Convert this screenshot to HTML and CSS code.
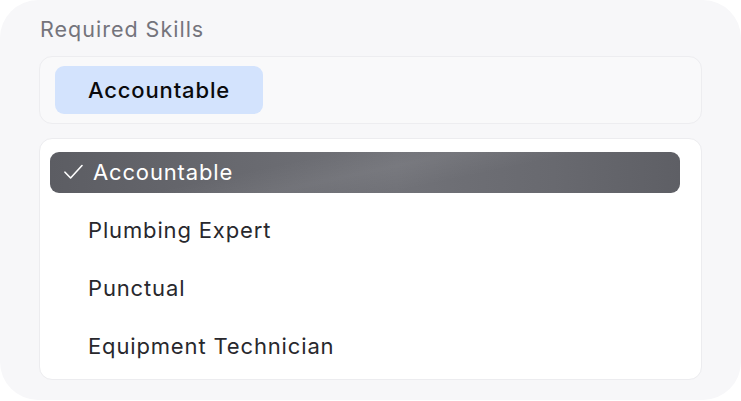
FILE: index.html
```html
<!DOCTYPE html>
<html lang="en">
<head>
<meta charset="utf-8">
<title>Required Skills</title>
<link rel="stylesheet" href="styles.css">
</head>
<body>
<div class="card">
  <div class="label">Required Skills</div>
  <div class="input">
    <span class="chip">Accountable</span>
  </div>
  <ul class="list">
    <li class="option selected">
      <div class="opt-inner">
        <svg class="check" width="20" height="16" viewBox="0 0 20 16" aria-hidden="true">
          <path d="M2 8.2 L7.6 14 L19 1.5" fill="none" stroke="#ffffff" stroke-width="1.6" stroke-linecap="round" stroke-linejoin="round"/>
        </svg>
        <span>Accountable</span>
      </div>
    </li>
    <li class="option"><div class="opt-inner"><span>Plumbing Expert</span></div></li>
    <li class="option"><div class="opt-inner"><span>Punctual</span></div></li>
    <li class="option"><div class="opt-inner"><span>Equipment Technician</span></div></li>
  </ul>
</div>
</body>
</html>
```

FILE: styles.css
```css
* { box-sizing: border-box; }
html, body {
  margin: 0;
  padding: 0;
  background: #ffffff;
}
body {
  font-family: Inter, "Noto Sans", "Liberation Sans", sans-serif;
}
.card {
  width: 741px;
  height: 400px;
  background: #f7f7f9;
  border-radius: 38px;
  padding: 14px 39px 20px 39px;
  display: flex;
  flex-direction: column;
}
.label {
  font-size: 21.5px;
  line-height: 30px;
  color: #74747c;
  padding-left: 1px;
  letter-spacing: 1px;
}
.input {
  margin-top: 12px;
  border: 1px solid #ededf0;
  border-radius: 13px;
  background: #f9f9fa;
  padding: 9px 15px;
  display: flex;
}
.chip {
  height: 48px;
  display: inline-flex;
  align-items: center;
  padding: 0 33px;
  background: #d3e3fd;
  border-radius: 9px;
  font-size: 22px;
  font-weight: 500;
  letter-spacing: 0.85px;
  color: #0a0a0c;
}
.list {
  list-style: none;
  margin: 14px 0 0 0;
  padding: 4px 0;
  background: #ffffff;
  border: 1px solid #ececef;
  border-radius: 13px;
}
.option {
  height: 58px;
  display: flex;
  align-items: center;
}
.opt-inner {
  flex: 1;
  height: 41px;
  margin: 0 21px 0 10px;
  padding-left: 38px;
  display: flex;
  align-items: center;
  font-size: 22px;
  letter-spacing: 0.85px;
  color: #28282d;
  border-radius: 9px;
}
.selected .opt-inner {
  padding-left: 13px;
  gap: 10px;
  color: #ffffff;
  background:
    linear-gradient(168deg, rgba(255,255,255,0) 35%, rgba(255,255,255,0.05) 50%, rgba(255,255,255,0) 65%),
    linear-gradient(90deg, #5c5d63 0%, #68696f 30%, #717278 55%, #68696f 80%, #5e5f65 100%);
}
.check {
  display: block;
  flex: none;
}
```
